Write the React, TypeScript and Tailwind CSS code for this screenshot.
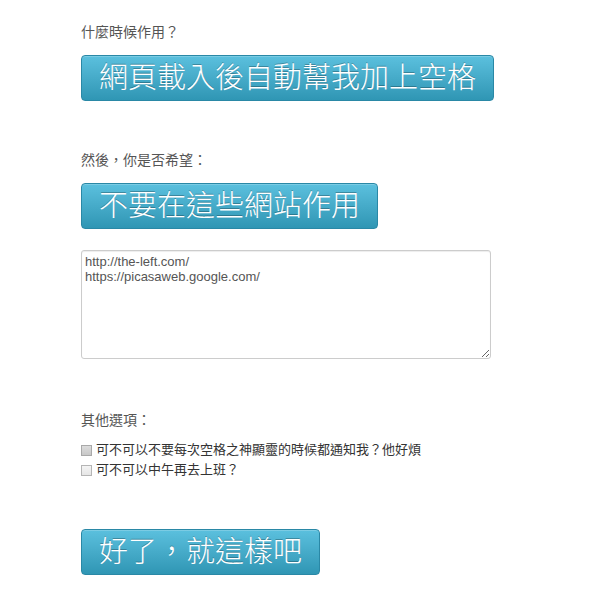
import React from 'react';

const cjk = { fontFamily: '"Liberation Sans", "Noto Sans CJK TC", sans-serif' };

function BigButton({ label, width }: { label: string; width: string }) {
  return (
    <button
      className={`${width} h-[46px] rounded-[4px] border border-[#2a88a6] bg-gradient-to-b from-[#5bc0de] to-[#2f96b4] text-[29px] font-light leading-none text-white [text-shadow:0_-1px_0_rgba(0,0,0,0.25)] shadow-[inset_0_1px_0_rgba(255,255,255,0.2)]`}
    >
      {label}
    </button>
  );
}

export default function App() {
  return (
    <div className="min-h-screen bg-white pl-[81px] pt-[22px]" style={cjk}>
      {/* 何時作用 */}
      <p className="h-5 text-[14px] leading-5 text-[#555]">什麼時候作用？</p>
      <div className="mt-[13px]">
        <BigButton label="網頁載入後自動幫我加上空格" width="w-[413px]" />
      </div>

      {/* 排除網站 */}
      <p className="mt-[49px] h-5 text-[14px] leading-5 text-[#555]">然後，你是否希望：</p>
      <div className="mt-[13px]">
        <BigButton label="不要在這些網站作用" width="w-[297px]" />
      </div>
      <textarea
        className="mt-[21px] block h-[109px] w-[410px] rounded-[3px] border border-[#ccc] px-[3px] py-[3px] text-[13px] leading-[15px] text-[#555] shadow-[inset_0_1px_1px_rgba(0,0,0,0.075)] outline-none"
        style={{ fontFamily: '"Liberation Sans", sans-serif' }}
        defaultValue={'http://the-left.com/\nhttps://picasaweb.google.com/'}
      />

      {/* 其他選項 */}
      <p className="mt-[51px] h-5 text-[14px] leading-5 text-[#555]">其他選項：</p>
      <div className="mt-[10px] flex flex-col">
        <label className="flex h-5 items-center gap-[4px] text-[13px] text-[#333]">
          <span className="h-[11px] w-[11px] border border-[#a9a9a9] bg-gradient-to-b from-[#dcdcdc] to-[#c8c8c8]" />
          可不可以不要每次空格之神顯靈的時候都通知我？他好煩
        </label>
        <label className="flex h-5 items-center gap-[4px] text-[13px] text-[#333]">
          <span className="h-[11px] w-[11px] border border-[#b5b5b5] bg-gradient-to-b from-[#f4f4f4] to-[#e6e6e6]" />
          可不可以中午再去上班？
        </label>
      </div>

      <div className="mt-[49px]">
        <BigButton label="好了，就這樣吧" width="w-[239px]" />
      </div>
    </div>
  );
}
